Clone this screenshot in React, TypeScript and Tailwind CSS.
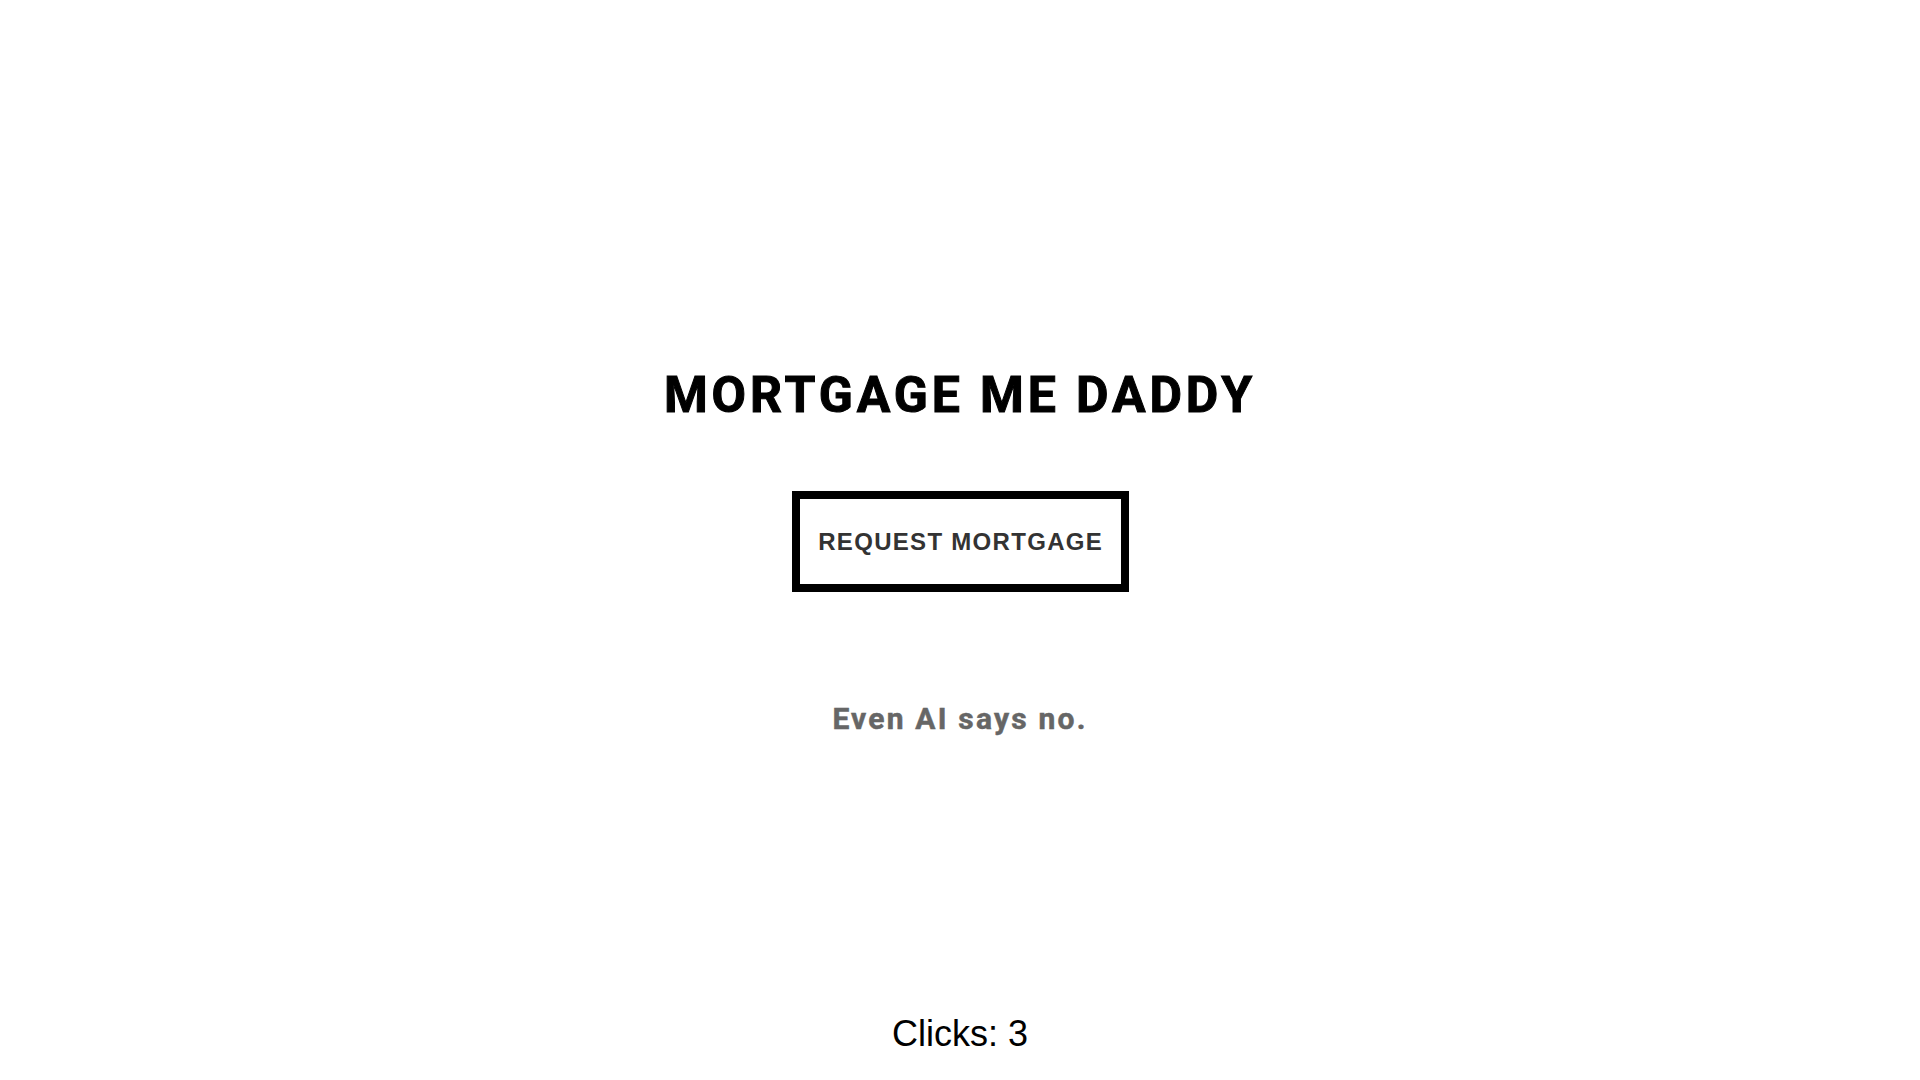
import React from "react";

export default function App() {
  return (
    <div className="min-h-screen w-full bg-white flex flex-col items-center pt-[365px]">
      <h1 className="font-['Roboto',sans-serif] font-bold text-[50px] leading-[60px] tracking-[3.9px] text-black [-webkit-text-stroke:1px_#000]">
        MORTGAGE ME DADDY
      </h1>
      <button className="mt-[66px] h-[101px] w-[337px] border-8 border-black bg-white flex items-center justify-center font-['Liberation_Sans',Arial,sans-serif] font-bold text-[24px] leading-[27px] tracking-[1.3px] text-[#333]">
        <span className="pl-[1.3px]">REQUEST MORTGAGE</span>
      </button>
      <p className="mt-[109px] font-['Roboto',sans-serif] font-bold text-[30px] leading-[36px] tracking-[2.2px] text-[#666] [-webkit-text-stroke:0.5px_#666]">
        Even AI says no.
      </p>
      <p className="mt-[277px] font-['Liberation_Sans',Arial,sans-serif] text-[36px] leading-[40px] text-black">
        Clicks: 3
      </p>
    </div>
  );
}
